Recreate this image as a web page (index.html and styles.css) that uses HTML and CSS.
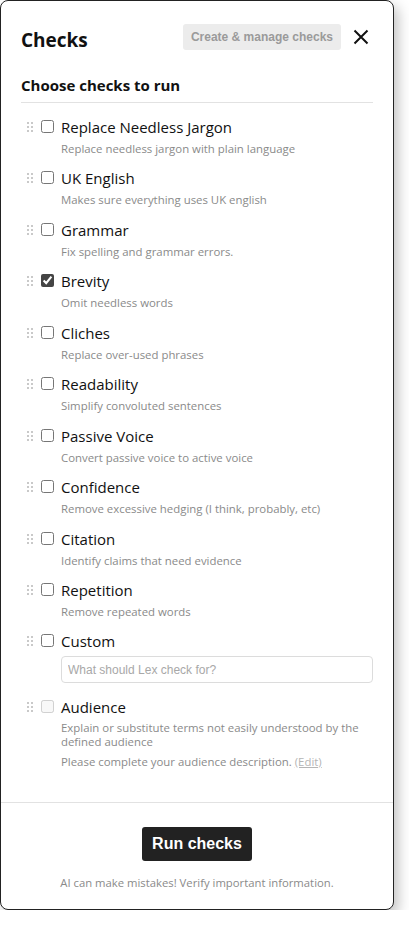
FILE: index.html
```html
<!DOCTYPE html>
<html lang="en">
<head>
<meta charset="utf-8">
<title>Checks</title>
<link rel="stylesheet" href="styles.css">
</head>
<body>
<div class="panel">
  <div class="main">
    <header class="header">
      <h1 class="title">Checks</h1>
      <div class="header-actions">
        <button class="manage-btn" type="button">Create &amp; manage checks</button>
        <button class="close-btn" type="button" aria-label="Close">
          <svg width="16" height="16" viewBox="0 0 16 16"><path d="M1.5 1.5 L14.5 14.5 M14.5 1.5 L1.5 14.5" stroke="#111" stroke-width="2" fill="none"/></svg>
        </button>
      </div>
    </header>
    <h2 class="subtitle">Choose checks to run</h2>
    <ul class="check-list">
      <li class="check">
        <span class="handle"><svg width="6" height="10" viewBox="0 0 6 10"><g fill="#c9c9c9"><rect x="0" y="0" width="2" height="2"/><rect x="4" y="0" width="2" height="2"/><rect x="0" y="4" width="2" height="2"/><rect x="4" y="4" width="2" height="2"/><rect x="0" y="8" width="2" height="2"/><rect x="4" y="8" width="2" height="2"/></g></svg></span>
        <input class="box" type="checkbox">
        <div class="check-text">
          <div class="check-label">Replace Needless Jargon</div>
          <div class="check-desc">Replace needless jargon with plain language</div>
        </div>
      </li>
      <li class="check">
        <span class="handle"><svg width="6" height="10" viewBox="0 0 6 10"><g fill="#c9c9c9"><rect x="0" y="0" width="2" height="2"/><rect x="4" y="0" width="2" height="2"/><rect x="0" y="4" width="2" height="2"/><rect x="4" y="4" width="2" height="2"/><rect x="0" y="8" width="2" height="2"/><rect x="4" y="8" width="2" height="2"/></g></svg></span>
        <input class="box" type="checkbox">
        <div class="check-text">
          <div class="check-label">UK English</div>
          <div class="check-desc">Makes sure everything uses UK english</div>
        </div>
      </li>
      <li class="check">
        <span class="handle"><svg width="6" height="10" viewBox="0 0 6 10"><g fill="#c9c9c9"><rect x="0" y="0" width="2" height="2"/><rect x="4" y="0" width="2" height="2"/><rect x="0" y="4" width="2" height="2"/><rect x="4" y="4" width="2" height="2"/><rect x="0" y="8" width="2" height="2"/><rect x="4" y="8" width="2" height="2"/></g></svg></span>
        <input class="box" type="checkbox">
        <div class="check-text">
          <div class="check-label">Grammar</div>
          <div class="check-desc">Fix spelling and grammar errors.</div>
        </div>
      </li>
      <li class="check">
        <span class="handle"><svg width="6" height="10" viewBox="0 0 6 10"><g fill="#c9c9c9"><rect x="0" y="0" width="2" height="2"/><rect x="4" y="0" width="2" height="2"/><rect x="0" y="4" width="2" height="2"/><rect x="4" y="4" width="2" height="2"/><rect x="0" y="8" width="2" height="2"/><rect x="4" y="8" width="2" height="2"/></g></svg></span>
        <input class="box" type="checkbox" checked>
        <div class="check-text">
          <div class="check-label">Brevity</div>
          <div class="check-desc">Omit needless words</div>
        </div>
      </li>
      <li class="check">
        <span class="handle"><svg width="6" height="10" viewBox="0 0 6 10"><g fill="#c9c9c9"><rect x="0" y="0" width="2" height="2"/><rect x="4" y="0" width="2" height="2"/><rect x="0" y="4" width="2" height="2"/><rect x="4" y="4" width="2" height="2"/><rect x="0" y="8" width="2" height="2"/><rect x="4" y="8" width="2" height="2"/></g></svg></span>
        <input class="box" type="checkbox">
        <div class="check-text">
          <div class="check-label">Cliches</div>
          <div class="check-desc">Replace over-used phrases</div>
        </div>
      </li>
      <li class="check">
        <span class="handle"><svg width="6" height="10" viewBox="0 0 6 10"><g fill="#c9c9c9"><rect x="0" y="0" width="2" height="2"/><rect x="4" y="0" width="2" height="2"/><rect x="0" y="4" width="2" height="2"/><rect x="4" y="4" width="2" height="2"/><rect x="0" y="8" width="2" height="2"/><rect x="4" y="8" width="2" height="2"/></g></svg></span>
        <input class="box" type="checkbox">
        <div class="check-text">
          <div class="check-label">Readability</div>
          <div class="check-desc">Simplify convoluted sentences</div>
        </div>
      </li>
      <li class="check">
        <span class="handle"><svg width="6" height="10" viewBox="0 0 6 10"><g fill="#c9c9c9"><rect x="0" y="0" width="2" height="2"/><rect x="4" y="0" width="2" height="2"/><rect x="0" y="4" width="2" height="2"/><rect x="4" y="4" width="2" height="2"/><rect x="0" y="8" width="2" height="2"/><rect x="4" y="8" width="2" height="2"/></g></svg></span>
        <input class="box" type="checkbox">
        <div class="check-text">
          <div class="check-label">Passive Voice</div>
          <div class="check-desc">Convert passive voice to active voice</div>
        </div>
      </li>
      <li class="check">
        <span class="handle"><svg width="6" height="10" viewBox="0 0 6 10"><g fill="#c9c9c9"><rect x="0" y="0" width="2" height="2"/><rect x="4" y="0" width="2" height="2"/><rect x="0" y="4" width="2" height="2"/><rect x="4" y="4" width="2" height="2"/><rect x="0" y="8" width="2" height="2"/><rect x="4" y="8" width="2" height="2"/></g></svg></span>
        <input class="box" type="checkbox">
        <div class="check-text">
          <div class="check-label">Confidence</div>
          <div class="check-desc">Remove excessive hedging (I think, probably, etc)</div>
        </div>
      </li>
      <li class="check">
        <span class="handle"><svg width="6" height="10" viewBox="0 0 6 10"><g fill="#c9c9c9"><rect x="0" y="0" width="2" height="2"/><rect x="4" y="0" width="2" height="2"/><rect x="0" y="4" width="2" height="2"/><rect x="4" y="4" width="2" height="2"/><rect x="0" y="8" width="2" height="2"/><rect x="4" y="8" width="2" height="2"/></g></svg></span>
        <input class="box" type="checkbox">
        <div class="check-text">
          <div class="check-label">Citation</div>
          <div class="check-desc">Identify claims that need evidence</div>
        </div>
      </li>
      <li class="check">
        <span class="handle"><svg width="6" height="10" viewBox="0 0 6 10"><g fill="#c9c9c9"><rect x="0" y="0" width="2" height="2"/><rect x="4" y="0" width="2" height="2"/><rect x="0" y="4" width="2" height="2"/><rect x="4" y="4" width="2" height="2"/><rect x="0" y="8" width="2" height="2"/><rect x="4" y="8" width="2" height="2"/></g></svg></span>
        <input class="box" type="checkbox">
        <div class="check-text">
          <div class="check-label">Repetition</div>
          <div class="check-desc">Remove repeated words</div>
        </div>
      </li>
      <li class="check">
        <span class="handle"><svg width="6" height="10" viewBox="0 0 6 10"><g fill="#c9c9c9"><rect x="0" y="0" width="2" height="2"/><rect x="4" y="0" width="2" height="2"/><rect x="0" y="4" width="2" height="2"/><rect x="4" y="4" width="2" height="2"/><rect x="0" y="8" width="2" height="2"/><rect x="4" y="8" width="2" height="2"/></g></svg></span>
        <input class="box" type="checkbox">
        <div class="check-text">
          <div class="check-label">Custom</div>
          <input class="custom-input" type="text" placeholder="What should Lex check for?">
        </div>
      </li>
      <li class="check">
        <span class="handle"><svg width="6" height="10" viewBox="0 0 6 10"><g fill="#c9c9c9"><rect x="0" y="0" width="2" height="2"/><rect x="4" y="0" width="2" height="2"/><rect x="0" y="4" width="2" height="2"/><rect x="4" y="4" width="2" height="2"/><rect x="0" y="8" width="2" height="2"/><rect x="4" y="8" width="2" height="2"/></g></svg></span>
        <input class="box" type="checkbox" disabled>
        <div class="check-text">
          <div class="check-label">Audience</div>
          <div class="check-desc multi">Explain or substitute terms not easily understood by the defined audience</div>
          <div class="check-note">Please complete your audience description. <a class="edit-link" href="#">(Edit)</a></div>
        </div>
      </li>
    </ul>
  </div>
  <footer class="footer">
    <button class="run-btn" type="button">Run checks</button>
    <p class="disclaimer">AI can make mistakes! Verify important information.</p>
  </footer>
</div>
</body>
</html>
```

FILE: styles.css
```css
* { box-sizing: border-box; }

html, body {
  margin: 0;
  padding: 0;
  background: #ffffff;
}

body {
  font-family: "Open Sans", "Noto Sans", "Liberation Sans", sans-serif;
  color: #111;
}

.panel {
  width: 394px;
  height: 910px;
  border: 1px solid #222;
  border-radius: 8px;
  background: #fff;
  box-shadow: 4px 6px 14px rgba(0, 0, 0, 0.25);
  display: flex;
  flex-direction: column;
  overflow: hidden;
}

.main {
  flex: 1;
  padding: 23px 20px 0 20px;
}

.header {
  display: flex;
  align-items: center;
  justify-content: space-between;
  height: 26px;
}

.title {
  margin: 0;
  font-size: 19px;
  font-weight: 700;
  line-height: 26px;
  color: #111;
  position: relative;
  top: 3px;
}

.header-actions {
  display: flex;
  align-items: center;
  gap: 12px;
  margin-right: 4px;
}

.manage-btn {
  font-family: "Liberation Sans", Arial, sans-serif;
  font-size: 12px;
  font-weight: 700;
  color: #9a9a9a;
  background: #ececec;
  border: none;
  border-radius: 3px;
  height: 26px;
  padding: 0 8px;
  cursor: pointer;
}

.close-btn {
  width: 16px;
  height: 16px;
  padding: 0;
  border: none;
  background: none;
  display: flex;
  cursor: pointer;
}

.subtitle {
  margin: 24px 0 0 0;
  font-size: 15px;
  font-weight: 700;
  line-height: 22px;
  padding-bottom: 6px;
  border-bottom: 1px solid #e2e2e2;
  color: #111;
}

.check-list {
  list-style: none;
  margin: 14px 0 0 0;
  padding: 0;
  display: flex;
  flex-direction: column;
  gap: 12.44px;
}

.check {
  display: grid;
  grid-template-columns: 13px 13px 1fr;
  column-gap: 7px;
  align-items: start;
}

.handle {
  height: 20px;
  display: flex;
  align-items: center;
  justify-content: flex-end;
  padding-right: 1px;
}

.box {
  width: 13px;
  height: 13px;
  margin: 3px 0 0 0;
  accent-color: #444;
}

.check-label {
  font-size: 15px;
  line-height: 20px;
  color: #111;
}

.check-desc {
  margin-top: 4px;
  font-size: 11.4px;
  line-height: 15px;
  color: #8a8a8a;
}

.check-desc.multi {
  line-height: 14px;
}

.check-note {
  margin-top: 5px;
  font-size: 11.4px;
  line-height: 15px;
  color: #8a8a8a;
}

.edit-link {
  color: #b5b5b5;
  text-decoration: underline;
}

.custom-input {
  display: block;
  width: 100%;
  height: 27px;
  margin: 5px 0 1px 0;
  border: 1px solid #dcdcdc;
  border-radius: 4px;
  padding: 0 6px;
  font-family: "Liberation Sans", Arial, sans-serif;
  font-size: 12px;
  color: #333;
  outline: none;
}

.custom-input::placeholder {
  color: #a8a8a8;
}

.footer {
  border-top: 1px solid #e2e2e2;
  display: flex;
  flex-direction: column;
  align-items: center;
  padding: 24px 20px 18px;
  height: 107px;
}

.run-btn {
  font-family: "Liberation Sans", Arial, sans-serif;
  font-size: 16px;
  font-weight: 700;
  color: #fff;
  background: #222;
  border: none;
  border-radius: 3px;
  height: 34px;
  padding: 0 10px;
  cursor: pointer;
}

.disclaimer {
  margin: 14px 0 0 0;
  font-size: 11.3px;
  line-height: 16px;
  color: #8a8a8a;
}
```
